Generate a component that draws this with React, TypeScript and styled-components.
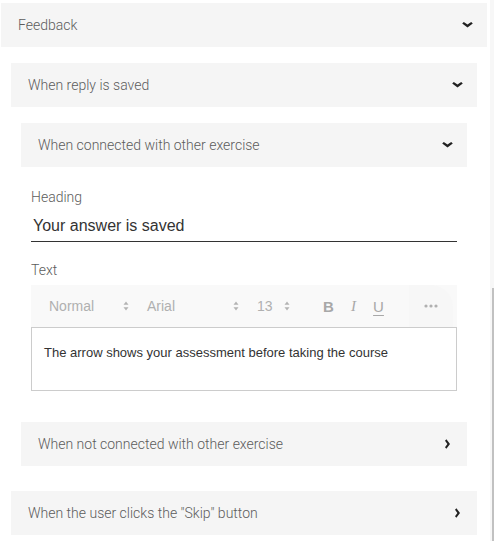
import React from 'react'
import styled, { createGlobalStyle } from 'styled-components'

const GlobalStyle = createGlobalStyle`
  html, body {
    margin: 0;
    padding: 0;
    background: #ffffff;
  }
  body {
    font-family: Roboto, "Liberation Sans", Arial, sans-serif;
  }
`

const ChevronDown = () => (
  <svg width="11" height="6" viewBox="0 0 11 6">
    <path d="M0.2 1.4 L1.8 0 L5.5 2.6 L9.2 0 L10.8 1.4 L5.5 5.6 Z" fill="#222" />
  </svg>
)

const ChevronRight = () => (
  <svg width="5" height="10" viewBox="0 0 5 10">
    <path d="M1.4 0.2 L0 1.8 L2.4 5 L0 8.2 L1.4 9.8 L5 5 Z" fill="#222" />
  </svg>
)

const UpDown = () => (
  <svg width="6" height="10" viewBox="0 0 6 10">
    <path d="M3 0.5 L5.5 3.8 L0.5 3.8 Z" fill="#b3b3b3" />
    <path d="M3 9.5 L5.5 6.2 L0.5 6.2 Z" fill="#b3b3b3" />
  </svg>
)

const Dots = () => (
  <svg width="14" height="4" viewBox="0 0 14 4">
    <circle cx="2" cy="2" r="1.6" fill="#b0b0b0" />
    <circle cx="7" cy="2" r="1.6" fill="#b0b0b0" />
    <circle cx="12" cy="2" r="1.6" fill="#b0b0b0" />
  </svg>
)

type Props = {
  title: string
  open?: boolean
  children?: React.ReactNode
}

const Section = ({ title, open = false, children }: Props) => (
  <SectionWrapper>
    <SectionHeader>
      <HeaderTitle>{title}</HeaderTitle>
      <HeaderIcon>{open ? <ChevronDown /> : <ChevronRight />}</HeaderIcon>
    </SectionHeader>
    {open && children}
  </SectionWrapper>
)

const App = () => {
  return (
    <Page>
      <GlobalStyle />
      <Main>
        <Section title="Feedback" open>
          <FeedbackBody>
            <Section title="When reply is saved" open>
              <ReplyBody>
                <Section title="When connected with other exercise" open>
                  <FieldsBody>
                    <FieldLabel>Heading</FieldLabel>
                    <HeadingInput>Your answer is saved</HeadingInput>
                    <FieldLabel spaced>Text</FieldLabel>
                    <Toolbar>
                      <PickerButton width={80}>
                        <span>Normal</span>
                        <UpDown />
                      </PickerButton>
                      <PickerButton width={92}>
                        <span>Arial</span>
                        <UpDown />
                      </PickerButton>
                      <PickerButton width={33}>
                        <span>13</span>
                        <UpDown />
                      </PickerButton>
                      <FormatGroup>
                        <FormatButton bold>B</FormatButton>
                        <FormatButton italic>I</FormatButton>
                        <FormatButton underline>U</FormatButton>
                      </FormatGroup>
                      <MoreButton>
                        <Dots />
                      </MoreButton>
                    </Toolbar>
                    <Editor>The arrow shows your assessment before taking the course</Editor>
                  </FieldsBody>
                </Section>
                <Section title="When not connected with other exercise" />
              </ReplyBody>
            </Section>
            <Section title='When the user clicks the "Skip" button' />
          </FeedbackBody>
        </Section>
      </Main>
      <ScrollTrack>
        <ScrollSpace />
        <ScrollThumb />
      </ScrollTrack>
    </Page>
  )
}

const Page = styled.div`
  display: flex;
  width: 494px;
  height: 541px;
  overflow: hidden;
`

const Main = styled.div`
  flex: 1;
  padding: 3px 3px 0 1px;
  min-width: 0;
`

const ScrollTrack = styled.div`
  width: 4px;
  display: flex;
  flex-direction: column;
  background: #f7f7f7;
`

const ScrollSpace = styled.div`
  height: 288px;
`

const ScrollThumb = styled.div`
  flex: 1;
  margin-left: 2px;
  background: #c1c1c1;
`

const SectionWrapper = styled.div`
  display: flex;
  flex-direction: column;
`

const SectionHeader = styled.div`
  height: 44px;
  display: flex;
  align-items: center;
  justify-content: space-between;
  padding: 0 14px 0 17px;
  background: #f5f5f5;
`

const HeaderTitle = styled.span`
  font-size: 14px;
  font-weight: 300;
  color: #5c5c5c;
`

const HeaderIcon = styled.span`
  display: flex;
  align-items: center;
  width: 11px;
  justify-content: center;
`

const FeedbackBody = styled.div`
  display: flex;
  flex-direction: column;
  gap: 25px;
  padding: 16px 10px 0;
`

const ReplyBody = styled.div`
  display: flex;
  flex-direction: column;
  gap: 31px;
  padding: 16px 10px 0;
`

const FieldsBody = styled.div`
  display: flex;
  flex-direction: column;
  padding: 20px 10px 0;
`

const FieldLabel = styled.div<{ spaced?: boolean }>`
  font-size: 14px;
  font-weight: 300;
  line-height: 20px;
  color: #5c5c5c;
  margin-top: ${(props) => (props.spaced ? '18px' : '0')};
  margin-bottom: ${(props) => (props.spaced ? '5px' : '2px')};
`

const HeadingInput = styled.div`
  height: 33px;
  box-sizing: border-box;
  display: flex;
  align-items: center;
  padding: 2px 0 0 2px;
  font-family: "Liberation Sans", Arial, sans-serif;
  font-size: 16px;
  color: #333;
  border-bottom: 1px solid #333;
`

const Toolbar = styled.div`
  height: 42px;
  display: flex;
  align-items: center;
  padding-left: 18px;
  background: #f9f9f9;
  font-family: "Liberation Sans", Arial, sans-serif;
  font-size: 14px;
  color: #b0b0b0;
`

const PickerButton = styled.div<{ width: number }>`
  width: ${(props) => props.width}px;
  display: flex;
  align-items: center;
  justify-content: space-between;
  margin-right: 18px;
`

const FormatGroup = styled.div`
  display: flex;
  gap: 14px;
  margin-left: 15px;
`

const FormatButton = styled.span<{ bold?: boolean; italic?: boolean; underline?: boolean }>`
  width: 11px;
  text-align: center;
  font-size: 15px;
  color: #a8a8a8;
  font-weight: ${(props) => (props.bold ? 600 : 'normal')};
  font-style: ${(props) => (props.italic ? 'italic' : 'normal')};
  font-family: ${(props) => (props.italic ? '"Liberation Serif", serif' : '"Liberation Sans", Arial, sans-serif')};
  text-decoration: ${(props) => (props.underline ? 'underline' : 'none')};
  text-underline-offset: 3px;
`

const MoreButton = styled.span`
  margin-left: auto;
  height: 42px;
  width: 44px;
  display: flex;
  align-items: center;
  justify-content: center;
  background: #f7f7f7;
  border-radius: 0 22px 0 0;
  margin-right: 4px;
`

const Editor = styled.div`
  height: 64px;
  box-sizing: border-box;
  border: 1px solid #cccccc;
  padding: 17px 12px 0;
  font-family: "Liberation Sans", Arial, sans-serif;
  font-size: 13px;
  color: #333;
`

export default App
